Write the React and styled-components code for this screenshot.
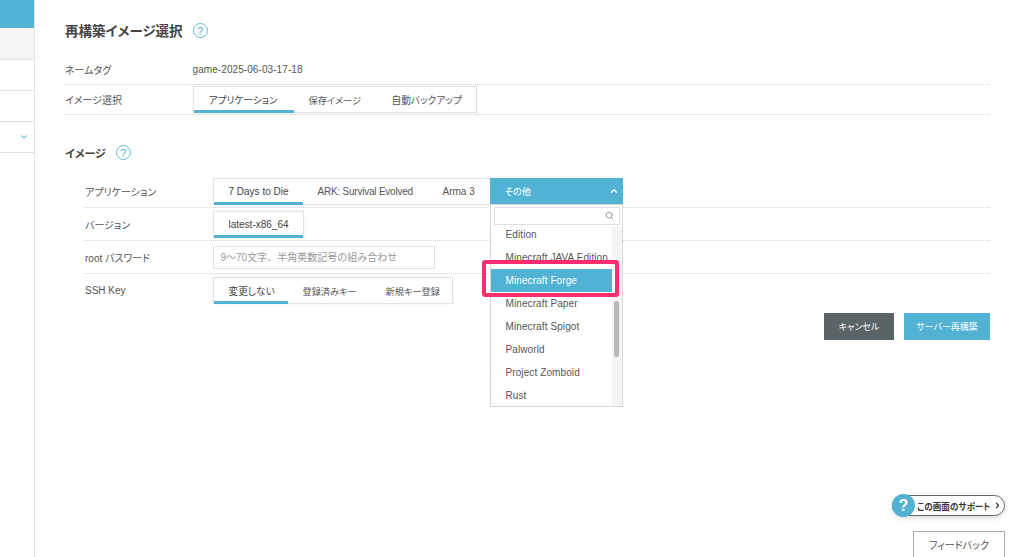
import React from "react";
import styled, { createGlobalStyle } from "styled-components";
import { ChevronDown, ChevronUp, Search } from "lucide-react";

const Global = createGlobalStyle`
  html, body { margin: 0; padding: 0; height: 100%; background: #fff; }
  body {
    font-family: "Liberation Sans", "Noto Sans CJK JP", sans-serif;
    font-size: 10px;
    color: #555;
    font-feature-settings: "palt";
  }
  * { box-sizing: border-box; }
`;

const Page = styled.div`
  position: relative;
  display: flex;
  width: 1024px;
  height: 557px;
  overflow: hidden;
`;

const Sidebar = styled.nav`
  flex: none;
  width: 35px;
  border-right: 1px solid #e2e2e2;
  display: flex;
  flex-direction: column;
`;

const SideItem = styled.div`
  height: ${(p) => p.$h}px;
  background: ${(p) => p.$bg || "#fff"};
  border-bottom: ${(p) => (p.$plain ? "none" : "1px solid #e2e2e2")};
  display: flex;
  align-items: center;
  justify-content: flex-end;
  padding-right: 5px;
  color: #52b2d4;
`;

const Main = styled.main`
  flex: 1;
  padding: 21px 34px 0 30px;
  display: flex;
  flex-direction: column;
`;

const Heading = styled.h2`
  margin: 0;
  display: flex;
  align-items: center;
  gap: 10px;
  height: 17px;
  font-size: ${(p) => p.$size}px;
  font-weight: 700;
  color: #444;
`;

const HelpMark = styled.span`
  width: 15px;
  height: 15px;
  margin-top: ${(p) => p.$drop || 0}px;
  border: 1.5px solid #62bcdc;
  border-radius: 50%;
  color: #52b2d4;
  font-size: 11px;
  font-weight: 400;
  display: inline-flex;
  align-items: center;
  justify-content: center;
`;

const Section = styled.section`
  margin-top: ${(p) => p.$top}px;
`;

const Indented = styled.div`
  padding-left: 20px;
  margin-top: 14px;
`;

const Row = styled.div`
  display: flex;
  align-items: center;
  height: ${(p) => p.$h || 33}px;
  border-bottom: ${(p) => (p.$last ? "none" : "1px dotted #d4d4d4")};
`;

const Label = styled.div`
  flex: none;
  width: 127.5px;
  color: #555;
`;

const Value = styled.div`
  font-size: 10px;
  letter-spacing: 0.08px;
`;

const Tabs = styled.div`
  display: flex;
  height: 27px;
  border: 1px solid #e3e3e3;
  background: #fff;
  box-shadow: 0 0 2px rgba(0, 0, 0, 0.08);
`;

const Tab = styled.div`
  width: ${(p) => p.$w}px;
  padding: 2px 0 0 15px;
  display: flex;
  align-items: center;
  border-bottom: 3px solid ${(p) => (p.$active ? "#52b2d4" : "transparent")};
  margin-bottom: -1px;
  font-size: ${(p) => p.$fs || 10}px;
  letter-spacing: ${(p) => p.$ls || 0}px;
  color: ${(p) => (p.$active ? "#444" : "#555")};
  white-space: nowrap;
`;

const OpenTabWrap = styled.div`
  position: relative;
  width: 133px;
  margin: -1px -1px -1px 0;
`;

const OpenTab = styled.div`
  height: 27px;
  background: #52b2d4;
  color: #fff;
  font-size: 9.3px;
  display: flex;
  align-items: center;
  justify-content: space-between;
  padding: 0 4px 0 15px;
`;

const Dropdown = styled.div`
  position: absolute;
  z-index: 5;
  top: 26px;
  left: 0;
  width: 133px;
  height: 203px;
  background: #fff;
  border: 1px solid #d8d8d8;
  display: flex;
  flex-direction: column;
`;

const SearchBox = styled.div`
  flex: none;
  margin: 2px 2px 2px 3px;
  height: 18px;
  border: 1px solid #e0e0e0;
  display: flex;
  align-items: center;
  justify-content: flex-end;
  padding-right: 5px;
  color: #999;
`;

const ListArea = styled.div`
  flex: 1;
  display: flex;
  min-height: 0;
`;

const List = styled.ul`
  flex: 1;
  list-style: none;
  margin: 0;
  padding: 0;
  overflow: hidden;
`;

const ListItem = styled.li`
  height: 23px;
  padding-left: 15px;
  display: flex;
  align-items: center;
  letter-spacing: 0.1px;
  color: ${(p) => (p.$active ? "#fff" : "#555")};
  background: ${(p) => (p.$active ? "#52b2d4" : "transparent")};
  white-space: nowrap;
  &:first-child { margin-top: -4px; }
`;

const ScrollTrack = styled.div`
  flex: none;
  width: 10px;
  background: #f4f4f4;
  padding-top: 74px;
  display: flex;
  justify-content: center;
`;

const ScrollThumb = styled.div`
  width: 5px;
  height: 56px;
  border-radius: 3px;
  background: #b8b8b8;
`;

const Annotation = styled.div`
  position: absolute;
  z-index: 6;
  left: -8px;
  top: 82px;
  width: 137px;
  height: 37px;
  border: 4px solid #ff2d6f;
  border-radius: 3px;
  pointer-events: none;
`;

const PasswordInput = styled.input`
  width: 222px;
  height: 23px;
  border: 1px solid #e3e3e3;
  padding: 0 7px;
  font: inherit;
  font-feature-settings: normal;
  outline: none;
  &::placeholder { color: #999; opacity: 1; }
`;

const Actions = styled.div`
  display: flex;
  justify-content: flex-end;
  gap: 10px;
  margin-top: 6px;
`;

const Button = styled.button`
  height: 27px;
  width: ${(p) => p.$w}px;
  border: none;
  font: inherit;
  font-feature-settings: "palt";
  font-size: 9px;
  color: #fff;
  background: ${(p) => p.$bg};
`;

const SupportPill = styled.div`
  position: absolute;
  left: 892px;
  top: 495px;
  width: 113px;
  height: 21px;
  border: 1px solid #666;
  border-radius: 11px;
  box-shadow: 0 2px 5px rgba(0, 0, 0, 0.15);
  display: flex;
  align-items: center;
  gap: 3px;
  padding-left: 24px;
  font-size: 8.6px;
  font-weight: 700;
  color: #333;
  background: #fff;
`;

const SupportMark = styled.span`
  position: absolute;
  left: -1px;
  top: -2px;
  width: 23px;
  height: 23px;
  border-radius: 50%;
  background: #52b2d4;
  color: #fff;
  font-size: 16px;
  font-weight: 700;
  display: flex;
  align-items: center;
  justify-content: center;
`;

const SupportArrow = styled(ChevronDown)`
  transform: rotate(-90deg);
`;

const Feedback = styled.div`
  position: absolute;
  left: 913px;
  top: 531px;
  width: 92px;
  height: 30px;
  border: 1px solid #aaa;
  background: #fff;
  padding-top: 5px;
  text-align: center;
  font-size: 10px;
  color: #555;
`;

const items = ["Edition", "Minecraft JAVA Edition", "Minecraft Forge", "Minecraft Paper", "Minecraft Spigot", "Palworld", "Project Zomboid", "Rust"];

export default function App() {
  return (
    <Page>
      <Global />
      <Sidebar>
        <SideItem $h={28} $bg="#52b2d4" $plain />
        <SideItem $h={32} $bg="#f6f6f6" />
        <SideItem $h={31} />
        <SideItem $h={31} />
        <SideItem $h={31}>
          <ChevronDown size={10} strokeWidth={2.5} />
        </SideItem>
      </Sidebar>
      <Main>
        <Heading $size={13.5}>
          再構築イメージ選択 <HelpMark $drop={2}>?</HelpMark>
        </Heading>
        <Section $top={17}>
          <Row $h={30}>
            <Label>ネームタグ</Label>
            <Value>game-2025-06-03-17-18</Value>
          </Row>
          <Row $h={30}>
            <Label>イメージ選択</Label>
            <Tabs>
              <Tab $active $w={100} $fs={9.7}>アプリケーション</Tab>
              <Tab $w={83} $fs={9.2}>保存イメージ</Tab>
              <Tab $w={99} $fs={9.7}>自動バックアップ</Tab>
            </Tabs>
          </Row>
        </Section>
        <Section $top={29}>
          <Heading $size={11}>
            イメージ <HelpMark>?</HelpMark>
          </Heading>
          <Indented>
            <Row>
              <Label>アプリケーション</Label>
              <Tabs>
                <Tab $active $w={89}>7 Days to Die</Tab>
                <Tab $w={125} $ls={-0.22}>ARK: Survival Evolved</Tab>
                <Tab $w={62}>Arma 3</Tab>
                <OpenTabWrap>
                  <OpenTab>
                    その他
                    <ChevronUp size={10} strokeWidth={3} />
                  </OpenTab>
                  <Dropdown>
                    <SearchBox>
                      <Search size={9} strokeWidth={2.5} />
                    </SearchBox>
                    <ListArea>
                      <List>
                        {items.map((name) => (
                          <ListItem key={name} $active={name === "Minecraft Forge"}>
                            {name}
                          </ListItem>
                        ))}
                      </List>
                      <ScrollTrack>
                        <ScrollThumb />
                      </ScrollTrack>
                    </ListArea>
                  </Dropdown>
                  <Annotation />
                </OpenTabWrap>
              </Tabs>
            </Row>
            <Row>
              <Label>バージョン</Label>
              <Tabs>
                <Tab $active $w={89}>latest-x86_64</Tab>
              </Tabs>
            </Row>
            <Row>
              <Label>root パスワード</Label>
              <PasswordInput placeholder="9〜70文字、半角英数記号の組み合わせ" />
            </Row>
            <Row $last>
              <Label>SSH Key</Label>
              <Tabs>
                <Tab $active $w={74} $fs={9.7}>変更しない</Tab>
                <Tab $w={83} $fs={9.2}>登録済みキー</Tab>
                <Tab $w={81} $fs={9.2}>新規キー登録</Tab>
              </Tabs>
            </Row>
          </Indented>
          <Actions>
            <Button $w={70} $bg="#5a6366">キャンセル</Button>
            <Button $w={86} $bg="#52b2d4">サーバー再構築</Button>
          </Actions>
        </Section>
      </Main>
      <SupportPill>
        <SupportMark>?</SupportMark>
        この画面のサポート
        <SupportArrow size={9} strokeWidth={3} />
      </SupportPill>
      <Feedback>フィードバック</Feedback>
    </Page>
  );
}
